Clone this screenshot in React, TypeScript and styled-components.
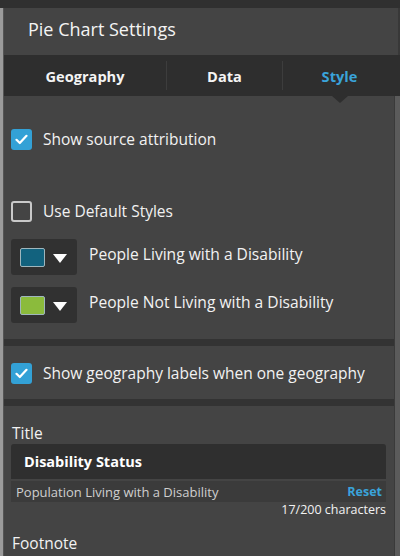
import React, { useState } from 'react';
import styled, { createGlobalStyle } from 'styled-components';

const GlobalStyle = createGlobalStyle`
  html, body {
    margin: 0;
    padding: 0;
    background: #2f2f2f;
    overflow: hidden;
  }
  body {
    font-family: "Open Sans", "Noto Sans", sans-serif;
    color: #f2f2f2;
  }
`;

const Page = styled.div`
  width: 400px;
  height: 556px;
  display: flex;
  flex-direction: column;
  overflow: hidden;
`;

const TopStrip = styled.div`
  height: 8px;
  background: #303030;
  flex-shrink: 0;
`;

const Body = styled.div`
  flex: 1;
  display: flex;
  min-height: 0;
`;

const LeftEdge = styled.div`
  width: 3px;
  background: #9b9b9b;
  border-right: 1px solid #555;
  flex-shrink: 0;
`;

const Panel = styled.div`
  flex: 1;
  display: flex;
  flex-direction: column;
  background: #444;
  min-width: 0;
`;

const Header = styled.div`
  height: 47px;
  box-sizing: border-box;
  display: flex;
  align-items: center;
  padding: 0 0 5px 24px;
  font-size: 18px;
  color: #f4f4f4;
  border-right: 2px solid #383838;
`;

const Tabs = styled.div`
  height: 41px;
  display: flex;
  align-items: center;
  background: #2e2e2e;
`;

const Tab = styled.div<{ $w: number; $active?: boolean; $divider?: boolean }>`
  position: relative;
  width: ${(p) => p.$w}px;
  height: 29px;
  display: flex;
  align-items: center;
  justify-content: center;
  font-weight: 700;
  font-size: 14.6px;
  color: ${(p) => (p.$active ? '#3aa3da' : '#f4f4f4')};
  border-left: ${(p) => (p.$divider ? '1px solid #3d3d3d' : 'none')};
  cursor: pointer;

  ${(p) =>
    p.$active &&
    `
    &::after {
      content: '';
      position: absolute;
      left: 50%;
      bottom: -13px;
      margin-left: -4px;
      border-left: 8px solid transparent;
      border-right: 8px solid transparent;
      border-top: 7px solid #2e2e2e;
      transform: translateX(-4px);
    }
  `}
`;

const ScrollArea = styled.div`
  flex: 1;
  display: flex;
  min-height: 0;
`;

const Content = styled.div`
  flex: 1;
  display: flex;
  flex-direction: column;
  min-width: 0;
`;

const ScrollTrack = styled.div`
  width: 5px;
  background: #5b5b5b;
  border-left: 1px solid #3a3a3a;
  flex-shrink: 0;
`;

const Section = styled.div<{ $pt: number; $pb: number }>`
  padding: ${(p) => p.$pt}px 8px ${(p) => p.$pb}px 7px;
  display: flex;
  flex-direction: column;
`;

const Separator = styled.div`
  height: 7px;
  background: #333;
  flex-shrink: 0;
`;

const CheckRow = styled.label<{ $mb?: number }>`
  display: flex;
  align-items: center;
  gap: 11px;
  font-size: 15.5px;
  line-height: 21px;
  height: 21px;
  color: #f2f2f2;
  margin-bottom: ${(p) => p.$mb ?? 0}px;
  cursor: pointer;
`;

const Box = styled.span<{ $checked: boolean }>`
  width: 21px;
  height: 21px;
  box-sizing: border-box;
  border-radius: 3px;
  display: flex;
  align-items: center;
  justify-content: center;
  flex-shrink: 0;
  background: ${(p) => (p.$checked ? '#33a1d6' : 'transparent')};
  border: ${(p) => (p.$checked ? 'none' : '2px solid #c9c9c9')};
`;

const ColorRow = styled.div<{ $mb?: number }>`
  display: flex;
  align-items: flex-start;
  gap: 12px;
  height: 36px;
  margin-bottom: ${(p) => p.$mb ?? 0}px;
`;

const Picker = styled.div`
  width: 66px;
  height: 36px;
  box-sizing: border-box;
  background: #313131;
  border-radius: 3px;
  display: flex;
  align-items: center;
  padding-left: 9px;
  gap: 8px;
`;

const Swatch = styled.span<{ $color: string }>`
  width: 25px;
  height: 19px;
  box-sizing: border-box;
  background: ${(p) => p.$color};
  border: 1px solid #9fb6bd;
  border-radius: 2px;
`;

const Caret = styled.span`
  width: 0;
  height: 0;
  border-left: 7px solid transparent;
  border-right: 7px solid transparent;
  border-top: 9px solid #fff;
  margin-top: 2px;
`;

const ColorLabel = styled.span`
  font-size: 15.6px;
  line-height: 21px;
  color: #f2f2f2;
  padding-top: 5px;
`;

const FieldLabel = styled.div`
  font-size: 15.5px;
  line-height: 18px;
  color: #f2f2f2;
  margin-bottom: 2px;
  padding-left: 1px;
`;

const TitleInput = styled.div`
  width: 375px;
  height: 35px;
  box-sizing: border-box;
  background: #2f2f2f;
  border-radius: 3px 3px 0 0;
  display: flex;
  align-items: center;
  padding-left: 13px;
  font-weight: 700;
  font-size: 14.5px;
  color: #fff;
`;

const SubRow = styled.div`
  width: 375px;
  height: 21px;
  box-sizing: border-box;
  margin-top: 2px;
  background: #3b3b3b;
  display: flex;
  align-items: center;
  justify-content: space-between;
  padding: 0 4px 0 5px;
  font-size: 13px;
  color: #cfcfcf;
`;

const ResetLink = styled.span`
  font-weight: 700;
  font-size: 12.5px;
  color: #3aa3da;
  cursor: pointer;
`;

const CharCount = styled.div`
  width: 375px;
  text-align: right;
  font-size: 12.5px;
  line-height: 16px;
  color: #f2f2f2;
  margin-bottom: 16px;
`;

const FootnoteBox = styled.div`
  width: 375px;
  height: 20px;
  background: #2f2f2f;
  border-radius: 3px 3px 0 0;
  margin-top: 3px;
`;

function Check() {
  return (
    <svg width="13" height="11" viewBox="0 0 13 11">
      <path d="M1.5 5.8 L4.8 9 L11.5 1.8" fill="none" stroke="#fff" strokeWidth="2.2" strokeLinecap="round" strokeLinejoin="round" />
    </svg>
  );
}

function Checkbox({ checked, label, mb, onToggle }: { checked: boolean; label: string; mb?: number; onToggle: () => void }) {
  return (
    <CheckRow $mb={mb} onClick={onToggle}>
      <Box $checked={checked}>{checked && <Check />}</Box>
      <span>{label}</span>
    </CheckRow>
  );
}

export default function App() {
  const [showSource, setShowSource] = useState(true);
  const [useDefault, setUseDefault] = useState(false);
  const [showGeo, setShowGeo] = useState(true);

  return (
    <>
      <GlobalStyle />
      <Page>
        <TopStrip />
        <Body>
          <LeftEdge />
          <Panel>
            <Header>Pie Chart Settings</Header>
            <Tabs>
              <Tab $w={162}>Geography</Tab>
              <Tab $w={115} $divider>Data</Tab>
              <Tab $w={113} $divider $active>Style</Tab>
            </Tabs>
            <ScrollArea>
              <Content>
                <Section $pt={33} $pb={16}>
                  <Checkbox checked={showSource} label="Show source attribution" mb={51} onToggle={() => setShowSource((c) => !c)} />
                  <Checkbox checked={useDefault} label="Use Default Styles" mb={17} onToggle={() => setUseDefault((c) => !c)} />
                  <ColorRow $mb={12}>
                    <Picker>
                      <Swatch $color="#12627e" />
                      <Caret />
                    </Picker>
                    <ColorLabel>People Living with a Disability</ColorLabel>
                  </ColorRow>
                  <ColorRow>
                    <Picker>
                      <Swatch $color="#8bbb3c" />
                      <Caret />
                    </Picker>
                    <ColorLabel>People Not Living with a Disability</ColorLabel>
                  </ColorRow>
                </Section>
                <Separator />
                <Section $pt={17} $pb={15}>
                  <Checkbox checked={showGeo} label="Show geography labels when one geography" onToggle={() => setShowGeo((c) => !c)} />
                </Section>
                <Separator />
                <Section $pt={18} $pb={0}>
                  <FieldLabel>Title</FieldLabel>
                  <TitleInput>Disability Status</TitleInput>
                  <SubRow>
                    <span>Population Living with a Disability</span>
                    <ResetLink>Reset</ResetLink>
                  </SubRow>
                  <CharCount>17/200 characters</CharCount>
                  <FieldLabel>Footnote</FieldLabel>
                  <FootnoteBox />
                </Section>
              </Content>
              <ScrollTrack />
            </ScrollArea>
          </Panel>
        </Body>
      </Page>
    </>
  );
}
